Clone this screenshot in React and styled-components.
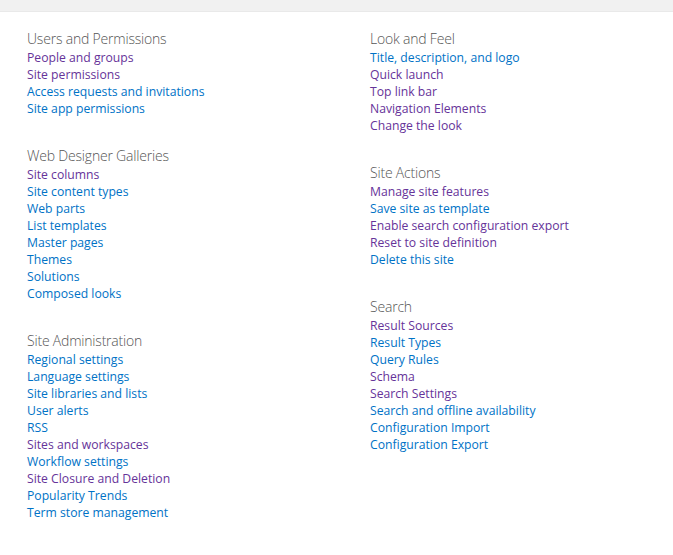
import React from "react";
import styled, { createGlobalStyle } from "styled-components";

const Global = createGlobalStyle`
  html, body { margin: 0; padding: 0; background: #ffffff; }
  body { font-family: "Open Sans", "Noto Sans", sans-serif; }
`;

const TopBar = styled.div`
  height: 11px;
  background: #f1f1f1;
  border-bottom: 1px solid #e9e9e9;
`;

const Columns = styled.div`
  display: grid;
  grid-template-columns: 343px 1fr;
  padding: 17px 0 0 27px;
`;

const Column = styled.div`
  display: flex;
  flex-direction: column;
  gap: 30px;
`;

const Section = styled.section`
  display: flex;
  flex-direction: column;
`;

const Title = styled.h2`
  margin: 0;
  font-family: "Open Sans", "Noto Sans", sans-serif;
  font-weight: 300;
  font-size: 14px;
  letter-spacing: -0.2px;
  line-height: 19px;
  color: #555555;
`;

const List = styled.ul`
  list-style: none;
  margin: 0;
  padding: 0;
`;

const Item = styled.li`
  line-height: 17px;
  height: 17px;
`;

const Link = styled.a`
  font-size: 12.2px;
  text-decoration: none;
  color: ${(p) => (p.$visited ? "#663399" : "#0072c6")};
  white-space: nowrap;
`;

const left = [
  {
    title: "Users and Permissions",
    links: [
      ["People and groups", 1],
      ["Site permissions", 1],
      ["Access requests and invitations", 0],
      ["Site app permissions", 0],
    ],
  },
  {
    title: "Web Designer Galleries",
    links: [
      ["Site columns", 1],
      ["Site content types", 0],
      ["Web parts", 0],
      ["List templates", 0],
      ["Master pages", 0],
      ["Themes", 0],
      ["Solutions", 0],
      ["Composed looks", 0],
    ],
  },
  {
    title: "Site Administration",
    links: [
      ["Regional settings", 0],
      ["Language settings", 0],
      ["Site libraries and lists", 0],
      ["User alerts", 0],
      ["RSS", 0],
      ["Sites and workspaces", 1],
      ["Workflow settings", 0],
      ["Site Closure and Deletion", 1],
      ["Popularity Trends", 0],
      ["Term store management", 0],
    ],
  },
];

const right = [
  {
    title: "Look and Feel",
    links: [
      ["Title, description, and logo", 0],
      ["Quick launch", 1],
      ["Top link bar", 1],
      ["Navigation Elements", 1],
      ["Change the look", 1],
    ],
  },
  {
    title: "Site Actions",
    links: [
      ["Manage site features", 1],
      ["Save site as template", 0],
      ["Enable search configuration export", 1],
      ["Reset to site definition", 1],
      ["Delete this site", 0],
    ],
  },
  {
    title: "Search",
    links: [
      ["Result Sources", 1],
      ["Result Types", 0],
      ["Query Rules", 0],
      ["Schema", 1],
      ["Search Settings", 1],
      ["Search and offline availability", 0],
      ["Configuration Import", 0],
      ["Configuration Export", 0],
    ],
  },
];

function Group({ sections }) {
  return (
    <Column>
      {sections.map((s) => (
        <Section key={s.title}>
          <Title>{s.title}</Title>
          <List>
            {s.links.map(([label, v]) => (
              <Item key={label}>
                <Link href="#" $visited={!!v}>
                  {label}
                </Link>
              </Item>
            ))}
          </List>
        </Section>
      ))}
    </Column>
  );
}

export default function App() {
  return (
    <>
      <Global />
      <TopBar />
      <Columns>
        <Group sections={left} />
        <Group sections={right} />
      </Columns>
    </>
  );
}
